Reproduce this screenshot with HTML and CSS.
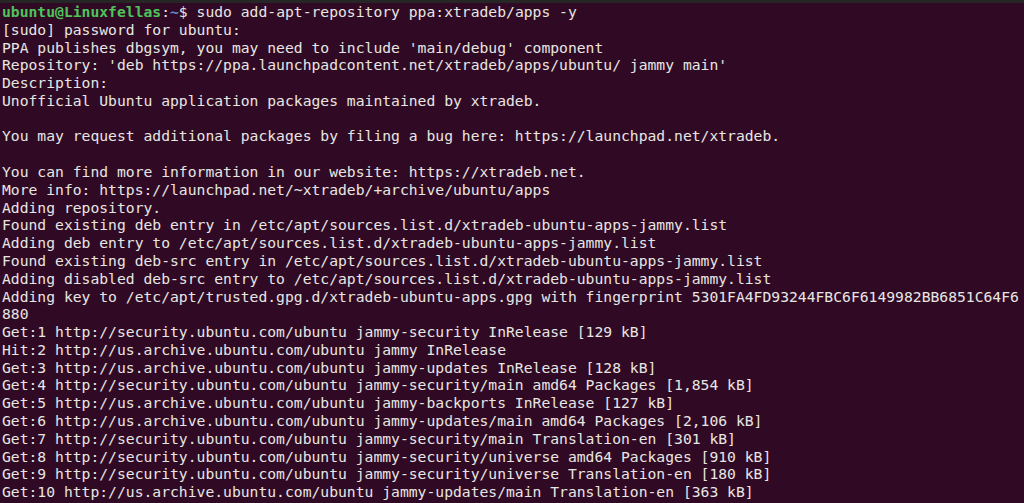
FILE: index.html
```html
<!DOCTYPE html>
<html>
<head>
<meta charset="utf-8">
<link rel="stylesheet" href="styles.css">
</head>
<body>
<div class="window">
<div class="topbar"></div>
<pre class="term"><span class="user">ubuntu@Linuxfellas</span>:<span class="path">~</span>$ sudo add-apt-repository ppa:xtradeb/apps -y
[sudo] password for ubuntu:
PPA publishes dbgsym, you may need to include 'main/debug' component
Repository: 'deb https://ppa.launchpadcontent.net/xtradeb/apps/ubuntu/ jammy main'
Description:
Unofficial Ubuntu application packages maintained by xtradeb.

You may request additional packages by filing a bug here: https://launchpad.net/xtradeb.

You can find more information in our website: https://xtradeb.net.
More info: https://launchpad.net/~xtradeb/+archive/ubuntu/apps
Adding repository.
Found existing deb entry in /etc/apt/sources.list.d/xtradeb-ubuntu-apps-jammy.list
Adding deb entry to /etc/apt/sources.list.d/xtradeb-ubuntu-apps-jammy.list
Found existing deb-src entry in /etc/apt/sources.list.d/xtradeb-ubuntu-apps-jammy.list
Adding disabled deb-src entry to /etc/apt/sources.list.d/xtradeb-ubuntu-apps-jammy.list
Adding key to /etc/apt/trusted.gpg.d/xtradeb-ubuntu-apps.gpg with fingerprint 5301FA4FD93244FBC6F6149982BB6851C64F6
880
Get:1 http://security.ubuntu.com/ubuntu jammy-security InRelease [129 kB]
Hit:2 http://us.archive.ubuntu.com/ubuntu jammy InRelease
Get:3 http://us.archive.ubuntu.com/ubuntu jammy-updates InRelease [128 kB]
Get:4 http://security.ubuntu.com/ubuntu jammy-security/main amd64 Packages [1,854 kB]
Get:5 http://us.archive.ubuntu.com/ubuntu jammy-backports InRelease [127 kB]
Get:6 http://us.archive.ubuntu.com/ubuntu jammy-updates/main amd64 Packages [2,106 kB]
Get:7 http://security.ubuntu.com/ubuntu jammy-security/main Translation-en [301 kB]
Get:8 http://security.ubuntu.com/ubuntu jammy-security/universe amd64 Packages [910 kB]
Get:9 http://security.ubuntu.com/ubuntu jammy-security/universe Translation-en [180 kB]
Get:10 http://us.archive.ubuntu.com/ubuntu jammy-updates/main Translation-en [363 kB]</pre>
</div>
</body>
</html>
```
FILE: styles.css
```css
html, body {
  margin: 0;
  padding: 0;
  background: #300a24;
}
.window {
  width: 1024px;
  height: 503px;
  overflow: hidden;
  background: #300a24;
  display: flex;
  flex-direction: column;
}
.topbar {
  height: 3px;
  background: #262626;
  flex: none;
}
.term {
  margin: 0;
  padding: 0 0 0 2px;
  font-family: "DejaVu Sans Mono", monospace;
  font-size: 14.7px;
  line-height: 17.78px;
  color: #e8e6e3;
  white-space: pre;
}
.user {
  color: #4fc35a;
  font-weight: bold;
}
.path {
  color: #5f8fd0;
  font-weight: bold;
}
```
